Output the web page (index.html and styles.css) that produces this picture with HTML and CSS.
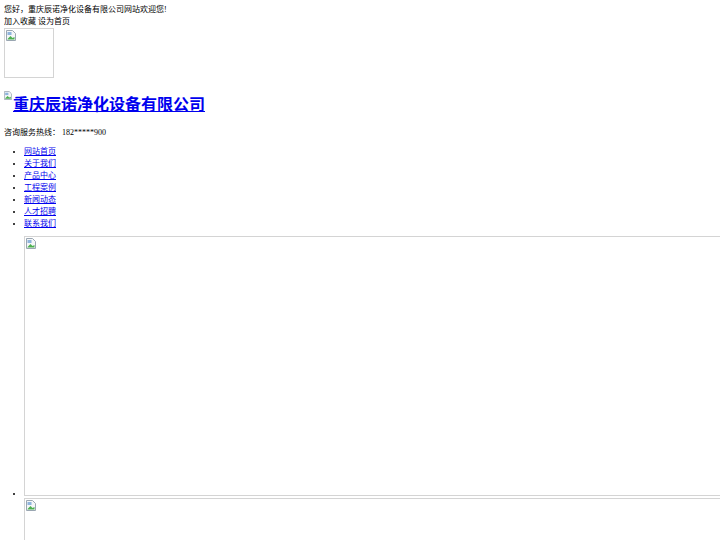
FILE: index.html
```html
<!DOCTYPE html>
<html lang="zh-CN">
<head>
<meta charset="utf-8">
<title>重庆辰诺净化设备有限公司</title>
<link rel="stylesheet" href="styles.css">
</head>
<body>
<div class="top">
  <div class="welcome">您好，重庆辰诺净化设备有限公司网站欢迎您!</div>
  <div class="tools">加入收藏 设为首页</div>
</div>
<div class="qr broken"><svg class="bicon" viewBox="0 0 10 11" width="10" height="11"><path d="M0.5 0.5h6l3 3v7h-9z" fill="#f4f6f8" stroke="#9aa6b2" stroke-width="1"/><path d="M1.5 2h4v3h-4z" fill="#8fb4dd"/><path d="M1.5 9l3-3 2 2 2-1v2.5h-7z" fill="#4caf50"/></svg></div>
<h1 class="logo"><svg class="bicon" viewBox="0 0 10 11" width="8" height="9"><path d="M0.5 0.5h6l3 3v7h-9z" fill="#f4f6f8" stroke="#9aa6b2" stroke-width="1"/><path d="M1.5 2h4v3h-4z" fill="#8fb4dd"/><path d="M1.5 9l3-3 2 2 2-1v2.5h-7z" fill="#4caf50"/></svg><a href="#">重庆辰诺净化设备有限公司</a></h1>
<p class="tel">咨询服务热线： 182*****900</p>
<ul class="nav">
  <li><a href="#">网站首页</a></li>
  <li><a href="#">关于我们</a></li>
  <li><a href="#">产品中心</a></li>
  <li><a href="#">工程案例</a></li>
  <li><a href="#">新闻动态</a></li>
  <li><a href="#">人才招聘</a></li>
  <li><a href="#">联系我们</a></li>
</ul>
<ul class="banner">
  <li><span class="slide broken"><svg class="bicon" viewBox="0 0 10 11" width="10" height="11"><path d="M0.5 0.5h6l3 3v7h-9z" fill="#f4f6f8" stroke="#9aa6b2" stroke-width="1"/><path d="M1.5 2h4v3h-4z" fill="#8fb4dd"/><path d="M1.5 9l3-3 2 2 2-1v2.5h-7z" fill="#4caf50"/></svg></span></li>
  <li><span class="slide broken"><svg class="bicon" viewBox="0 0 10 11" width="10" height="11"><path d="M0.5 0.5h6l3 3v7h-9z" fill="#f4f6f8" stroke="#9aa6b2" stroke-width="1"/><path d="M1.5 2h4v3h-4z" fill="#8fb4dd"/><path d="M1.5 9l3-3 2 2 2-1v2.5h-7z" fill="#4caf50"/></svg></span></li>
</ul>
</body>
</html>
```
FILE: styles.css
```css
html {
  overflow: hidden;
}
body {
  margin: 4px 0 4px 4px;
  font-family: "Liberation Serif", "Noto Sans CJK SC", serif;
  font-size: 8px;
  line-height: 12px;
  color: #000;
}
a {
  color: #0000ee;
  text-decoration: underline;
}
.broken {
  box-sizing: border-box;
  border: 1px solid #d4d4d4;
  position: relative;
}
.broken .bicon {
  position: absolute;
  left: 1px;
  top: 1px;
}
.qr {
  width: 50px;
  height: 50px;
}
.logo {
  margin: 13px 0 0;
  font-size: 16px;
  line-height: 24px;
  font-weight: bold;
  font-family: "Liberation Serif", "Noto Sans CJK SC", serif;
}
.logo .bicon {
  vertical-align: 10px;
  margin-right: 1px;
}
.tel {
  margin: 10px 0 0;
}
.nav {
  margin: 7px 0 0;
  padding-left: 20px;
}
.banner {
  margin: 6px 0 0;
  padding-left: 20px;
  overflow: hidden;
}
.banner li {
  line-height: 8px;
}
.slide {
  display: inline-block;
  width: 1000px;
  height: 260px;
  vertical-align: bottom;
  margin-bottom: 2px;
}
```
